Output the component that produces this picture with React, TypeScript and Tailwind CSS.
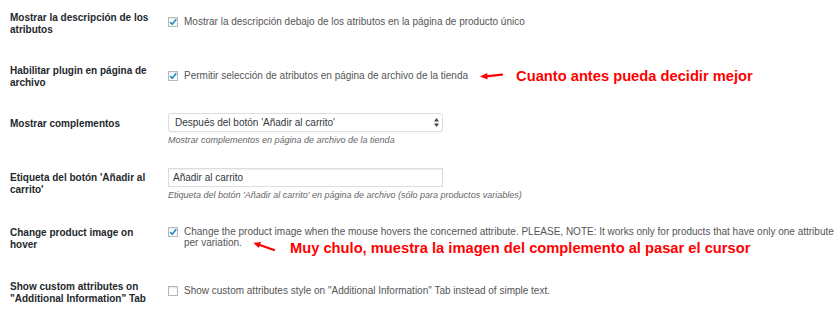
import React from "react";

const Check = ({ checked }: { checked: boolean }) => (
  <span className="relative block w-[10px] h-[10px] shrink-0 border border-[#b4b9be] bg-white shadow-[inset_0_1px_2px_rgba(0,0,0,0.1)]">
    {checked && (
      <svg width="10" height="10" viewBox="0 0 10 10" className="absolute top-[-1px] left-[-1px]">
        <path d="M2.2 5.1 L4.2 7.3 L8.3 2.3" stroke="#1e8cbe" strokeWidth="1.6" fill="none" strokeLinejoin="round" />
      </svg>
    )}
  </span>
);

const Label = ({ children }: { children: React.ReactNode }) => (
  <div className="w-[168px] shrink-0 pl-[10px] pr-[13px] pt-[11.5px] text-[10px] leading-[12px] font-bold text-[#23282d]">
    {children}
  </div>
);

export default function App() {
  return (
    <div className="w-[840px] h-[313px] overflow-hidden bg-white font-['Liberation_Sans',Arial,sans-serif]">
      {/* Row 1 */}
      <div className="flex h-[53px]">
        <Label>Mostrar la descripción de los atributos</Label>
        <div className="pt-[15.5px] flex items-start">
          <div className="flex items-center gap-[6px] text-[10px] leading-[12px] text-[#555]">
            <Check checked />
            <span>Mostrar la descripción debajo de los atributos en la página de producto único</span>
          </div>
        </div>
      </div>

      {/* Row 2 */}
      <div className="flex h-[53px]">
        <Label>Habilitar plugin en página de archivo</Label>
        <div className="pt-[14.5px] flex items-start">
          <div className="flex items-center gap-[6px] text-[10px] leading-[12px] text-[#555]">
            <Check checked />
            <span>Permitir selección de atributos en página de archivo de la tienda</span>
            <svg width="26" height="12" viewBox="0 0 26 12" className="ml-[4px] shrink-0">
              <polygon points="2,6.4 9.2,3 9.6,9.6" fill="#f00" />
              <path d="M8 6.3 L24 4.6" stroke="#f00" strokeWidth="2.2" strokeLinecap="round" />
            </svg>
            <span className="ml-[6px] text-[14.7px] leading-[17px] font-bold text-[#f00]">
              Cuanto antes pueda decidir mejor
            </span>
          </div>
        </div>
      </div>

      {/* Row 3 */}
      <div className="flex h-[54px]">
        <Label>Mostrar complementos</Label>
        <div className="pt-[7px] flex flex-col">
          <div className="w-[275px] h-[19px] border border-[#ddd] rounded-[3px] bg-white shadow-[0_1px_1px_rgba(0,0,0,0.04)] flex items-center justify-between pl-[6px] pr-[3px] text-[10px] text-[#32373c]">
            <span>Después del botón 'Añadir al carrito'</span>
            <svg width="5" height="9" viewBox="0 0 5 9">
              <polygon points="0,3.6 2.5,0 5,3.6" fill="#444" />
              <polygon points="0,5.4 2.5,9 5,5.4" fill="#444" />
            </svg>
          </div>
          <div className="mt-[3px] text-[9px] leading-[11px] italic text-[#666]">
            Mostrar complementos en página de archivo de la tienda
          </div>
        </div>
      </div>

      {/* Row 4 */}
      <div className="flex h-[55px]">
        <Label>Etiqueta del botón 'Añadir al carrito'</Label>
        <div className="pt-[8px] flex flex-col">
          <div className="w-[275px] h-[19px] border border-[#ddd] bg-white shadow-[inset_0_1px_2px_rgba(0,0,0,0.07)] flex items-center pl-[4px] text-[10px] text-[#32373c]">
            Añadir al carrito
          </div>
          <div className="mt-[3px] text-[9px] leading-[11px] italic text-[#666]">
            Etiqueta del botón 'Añadir al carrito' en página de archivo (sólo para productos variables)
          </div>
        </div>
      </div>

      {/* Row 5 */}
      <div className="relative flex h-[54px]">
        <Label>Change product image on hover</Label>
        <div className="pt-[10.5px] flex items-start gap-[6px] text-[10px] leading-[11.5px] text-[#555] shrink-0">
          <div className="mt-[1.5px]">
            <Check checked />
          </div>
          <div className="flex flex-col items-start">
            <span className="whitespace-nowrap">
              Change the product image when the mouse hovers the concerned attribute. PLEASE, NOTE: It works only for products that have only one attribute
            </span>
            <span>per variation.</span>
          </div>
        </div>
        <svg width="28" height="15" viewBox="0 0 28 15" className="absolute left-[250px] top-[23px]">
          <polygon points="3.3,4.7 8.8,10.1 11,4" fill="#f00" />
          <path d="M9.9 7 L24 12" stroke="#f00" strokeWidth="2.2" strokeLinecap="round" />
        </svg>
        <span className="absolute left-[290px] top-[25px] text-[14.7px] leading-[17px] font-bold text-[#f00] whitespace-nowrap">
          Muy chulo, muestra la imagen del complemento al pasar el cursor
        </span>
      </div>

      {/* Row 6 */}
      <div className="flex h-[44px]">
        <Label>Show custom attributes on "Additional Information" Tab</Label>
        <div className="pt-[15.5px] flex items-start">
          <div className="flex items-center gap-[6px] text-[10px] leading-[12px] text-[#555]">
            <Check checked={false} />
            <span>Show custom attributes style on "Additional Information" Tab instead of simple text.</span>
          </div>
        </div>
      </div>
    </div>
  );
}
